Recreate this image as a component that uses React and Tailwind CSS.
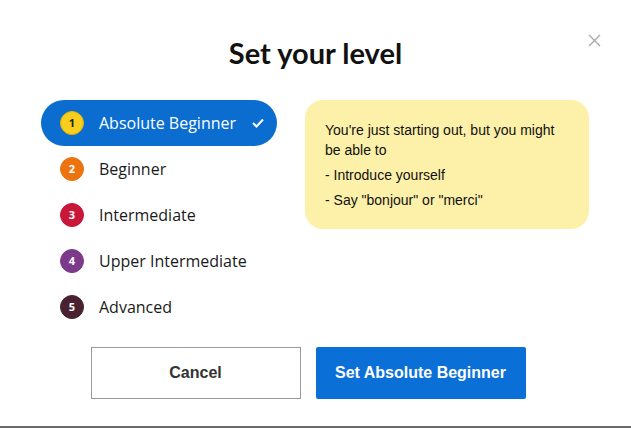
import React, { useState } from 'react';

const levels = [
  { n: 1, name: 'Absolute Beginner', circle: 'bg-[#f7cd1e] border-[#e0b000] text-[#222]' },
  { n: 2, name: 'Beginner', circle: 'bg-[#ec7410] border-[#ec7410] text-white' },
  { n: 3, name: 'Intermediate', circle: 'bg-[#c9173a] border-[#c9173a] text-white' },
  { n: 4, name: 'Upper Intermediate', circle: 'bg-[#7d3a8b] border-[#7d3a8b] text-white' },
  { n: 5, name: 'Advanced', circle: 'bg-[#4a2131] border-[#4a2131] text-white' },
];

const App = () => {
  const [selected, setSelected] = useState(1);

  return (
    <div className="relative w-full h-[428px] bg-white border-b-2 border-[#6b6b6b] flex flex-col">
      <button className="absolute top-[34px] right-[30px] text-[#a8a8a8]">
        <svg width="13" height="13" viewBox="0 0 13 13" stroke="currentColor" strokeWidth="1.4">
          <path d="M1 1 L12 12 M12 1 L1 12" />
        </svg>
      </button>

      <h1 className="mt-[35px] text-center text-[29px] font-bold text-[#111] font-['Lato',sans-serif] leading-[36px]">
        Set your level
      </h1>

      <div className="flex mt-[29px] ml-[41px]">
        <ul className="w-[236px] flex flex-col">
          {levels.map((l) => {
            const active = l.n === selected;
            return (
              <li
                key={l.n}
                onClick={() => setSelected(l.n)}
                className={
                  'h-[46px] flex items-center rounded-full pl-[19px] pr-[13px] cursor-pointer ' +
                  (active ? 'bg-[#0b6dcf] text-white' : 'text-[#1a1a1a]')
                }
              >
                <span
                  className={
                    'w-[24px] h-[24px] rounded-full border flex items-center justify-center text-[11px] font-bold font-[\'Open_Sans\',sans-serif] ' +
                    l.circle
                  }
                >
                  {l.n}
                </span>
                <span className="ml-[15px] flex-1 text-[16px] leading-[20px] font-['Open_Sans',sans-serif]">{l.name}</span>
                {active && (
                  <svg width="12" height="10" viewBox="0 0 12 10" fill="none" stroke="white" strokeWidth="2">
                    <path d="M1 5 L4.5 8.5 L11 1.5" />
                  </svg>
                )}
              </li>
            );
          })}
        </ul>

        <div className="ml-[28px] w-[284px] h-[129px] bg-[#fdf0a9] rounded-[18px] pl-[20px] pr-[16px] pt-[20px] font-['Liberation_Sans',sans-serif] text-[14px] text-[#111] leading-[20px]">
          <p>You're just starting out, but you might be able to</p>
          <p className="mt-[5px]">- Introduce yourself</p>
          <p className="mt-[5px]">- Say "bonjour" or "merci"</p>
        </div>
      </div>

      <div className="flex justify-center gap-[15px] mt-[17px] pr-[15px] font-['Liberation_Sans',sans-serif]">
        <button className="w-[210px] h-[52px] border border-[#9a9a9a] bg-white text-[#333] text-[16px] font-bold">
          Cancel
        </button>
        <button className="w-[210px] h-[52px] bg-[#0b6fd8] text-white text-[16px] font-bold rounded-[2px]">
          Set Absolute Beginner
        </button>
      </div>
    </div>
  );
};

export default App;
